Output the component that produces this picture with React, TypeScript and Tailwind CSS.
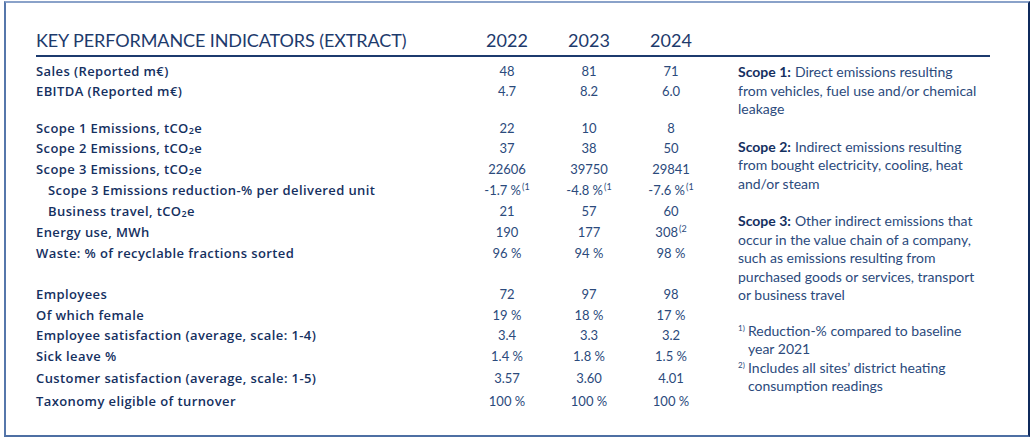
type Row = {
  label?: string;
  values?: React.ReactNode[];
  indent?: boolean;
  h: string;
};

const Co2 = () => (
  <>
    tCO<sub className="relative top-[1px] text-[9px] leading-none">2</sub>e
  </>
);

const Note = ({ n }: { n: string }) => (
  <sup className="ml-[1px] text-[9px] leading-none">({n}</sup>
);

const rows: Row[] = [
  { label: 'Sales (Reported m€)', values: ['48', '81', '71'], h: 'h-5' },
  { label: 'EBITDA (Reported m€)', values: ['4.7', '8.2', '6.0'], h: 'h-5' },
  { h: 'h-[17px]' },
  { label: 'Scope 1 Emissions, ', values: ['22', '10', '8'], h: 'h-5' },
  { label: 'Scope 2 Emissions, ', values: ['37', '38', '50'], h: 'h-5' },
  { label: 'Scope 3 Emissions, ', values: ['22606', '39750', '29841'], h: 'h-[21px]' },
  {
    label: 'Scope 3 Emissions reduction-% per delivered unit',
    indent: true,
    values: [
      <>-1.7 %<Note n="1" /></>,
      <>-4.8 %<Note n="1" /></>,
      <>-7.6 %<Note n="1" /></>,
    ],
    h: 'h-[21px]',
  },
  { label: 'Business travel, ', indent: true, values: ['21', '57', '60'], h: 'h-[21px]' },
  { label: 'Energy use, MWh', values: ['190', '177', <>308<Note n="2" /></>], h: 'h-[21px]' },
  { label: 'Waste: % of recyclable fractions sorted', values: ['96 %', '94 %', '98 %'], h: 'h-[22px]' },
  { h: 'h-5' },
  { label: 'Employees', values: ['72', '97', '98'], h: 'h-5' },
  { label: 'Of which female', values: ['19 %', '18 %', '17 %'], h: 'h-[21px]' },
  { label: 'Employee satisfaction (average, scale: 1-4)', values: ['3.4', '3.3', '3.2'], h: 'h-5' },
  { label: 'Sick leave %', values: ['1.4 %', '1.8 %', '1.5 %'], h: 'h-[21px]' },
  { label: 'Customer satisfaction (average, scale: 1-5)', values: ['3.57', '3.60', '4.01'], h: 'h-6' },
  { label: 'Taxonomy eligible of turnover', values: ['100 %', '100 %', '100 %'], h: 'h-[22px]' },
];

const withCo2 = new Set(['Scope 1 Emissions, ', 'Scope 2 Emissions, ', 'Scope 3 Emissions, ', 'Business travel, ']);

export default function App() {
  return (
    <div className="h-[439px] w-[1035px] bg-white pt-px pl-1 font-['Lato',sans-serif] text-[#1d3a6c]">
      <div className="h-[436px] w-[1026px] border-t-2 border-r-2 border-b-2 border-l-2 border-t-[#8aa2c9] border-r-[#0f2a5c] border-b-[#4e6fa3] border-l-[#5677ab] pl-[30px] pr-[38px]">
        <div className="flex border-b-2 border-[#1c3a6e] pt-[26px] pb-[4px] text-[18px] leading-[22px]">
          <div className="w-[430px] tracking-[-0.1px]">KEY PERFORMANCE INDICATORS (EXTRACT)</div>
          <div className="w-[82px] text-center">2022</div>
          <div className="w-[82px] text-center">2023</div>
          <div className="w-[82px] text-center">2024</div>
        </div>

        <div className="flex pt-[5px]">
          <div className="w-[676px] text-[13px]">
            {rows.map((r, i) => (
              <div key={i} className={`flex items-center ${r.h}`}>
                {r.label && (
                  <>
                    <div
                      className={`w-[430px] font-['Open_Sans',sans-serif] text-[13px] font-semibold tracking-[0.4px] text-[#15305f] ${r.indent ? 'pl-[12px]' : ''}`}
                    >
                      {r.label}
                      {withCo2.has(r.label) && <Co2 />}
                    </div>
                    {r.values!.map((v, j) => (
                      <div key={j} className="w-[82px] text-center text-[#2b4a7c]">
                        {v}
                      </div>
                    ))}
                  </>
                )}
              </div>
            ))}
          </div>

          <div className="ml-[26px] w-[245px] pt-[1px] text-[14px] leading-[18.5px] text-[#2b4a7c]">
            <p>
              <b className="mr-[4px] text-[#15305f]">Scope 1:</b>Direct emissions resulting from vehicles, fuel use
              and/or chemical leakage
            </p>
            <p className="mt-[19px]">
              <b className="mr-[4px] text-[#15305f]">Scope 2:</b>Indirect emissions resulting from bought
              electricity, cooling, heat and/or steam
            </p>
            <p className="mt-[19px]">
              <b className="mr-[4px] text-[#15305f]">Scope 3:</b>Other indirect emissions that occur in the value
              chain of a company, such as emissions resulting from purchased goods or services, transport or business
              travel
            </p>
            <div className="mt-[17px] flex">
              <span className="w-[10px] shrink-0 text-[8px] leading-[12px]">1)</span>
              <span>Reduction-% compared to baseline year 2021</span>
            </div>
            <div className="flex">
              <span className="w-[10px] shrink-0 text-[8px] leading-[12px]">2)</span>
              <span>Includes all sites’ district heating consumption readings</span>
            </div>
          </div>
        </div>
      </div>
    </div>
  );
}
